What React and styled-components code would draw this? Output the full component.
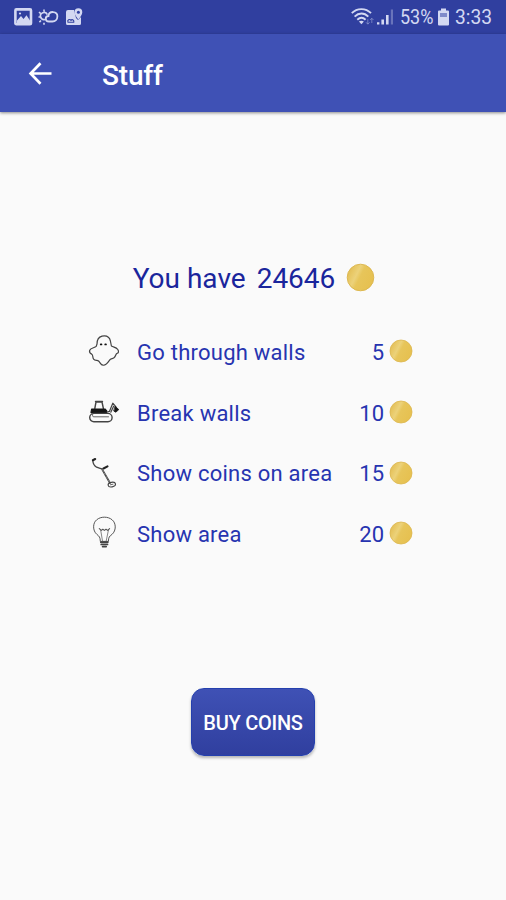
import React from 'react';
import styled, { createGlobalStyle } from 'styled-components';

const GlobalStyle = createGlobalStyle`
  * {
    box-sizing: border-box;
  }

  body {
    margin: 0;
    background: #fafafa;
    font-family: Roboto, 'Liberation Sans', sans-serif;
  }
`;

const Screen = styled.div`
  display: flex;
  flex-direction: column;
  width: 100%;
  height: 900px;
  background: #fafafa;
`;

const StatusBar = styled.div`
  display: flex;
  justify-content: space-between;
  height: 34px;
  padding: 0 14px;
  background: #303f9f;
  color: #d3d8f2;
`;

const StatusGroup = styled.div`
  display: flex;
  align-items: center;

  svg {
    display: block;
    flex: none;
  }
`;

const StatusText = styled.span`
  width: ${({ $width }) => $width}px;
  margin-left: ${({ $gap }) => $gap}px;
  font-size: 20px;
  line-height: 34px;
  white-space: nowrap;
  transform: scaleX(${({ $scale }) => $scale || 1});
  transform-origin: left center;
`;

const AppBar = styled.header`
  display: flex;
  align-items: center;
  height: 78px;
  padding: 0 28px;
  background: #3f51b5;
  box-shadow: 0 1px 3px rgba(0, 0, 0, 0.45);
  color: #fff;
`;

const BackButton = styled.button`
  display: flex;
  padding: 0;
  border: none;
  background: none;
  color: inherit;
  cursor: pointer;
`;

const Title = styled.h1`
  margin: 5px 0 0 50px;
  font-size: 28px;
  font-weight: 500;
  line-height: 34px;
  letter-spacing: -0.2px;
`;

const Content = styled.main`
  display: flex;
  flex-direction: column;
  flex: 1;
  align-items: center;
  padding-top: 147px;
`;

const Balance = styled.div`
  display: flex;
  align-items: center;
  height: 36px;
  padding-left: 2px;
  font-size: 28px;
  color: #1a259c;

  span {
    margin: 2px 11px 0 0;
  }
`;

const ItemList = styled.ul`
  display: flex;
  flex-direction: column;
  width: 325px;
  margin: 26px 5px 0 0;
  padding: 0;
  list-style: none;
`;

const Item = styled.li`
  display: grid;
  grid-template-columns: 32px 1fr auto 24px;
  align-items: center;
  height: 60.7px;
  font-size: 22px;
  color: #2734b0;
`;

const ItemName = styled.span`
  padding: 2px 0 0 17px;
  letter-spacing: 0.24px;
  white-space: nowrap;
`;

const Price = styled.span`
  padding-top: 2px;
  margin-right: 5px;
`;

const BuyButton = styled.button`
  width: 124px;
  height: 68px;
  margin: 124px 0 0;
  padding: 2px 0 0;
  border: 1px solid #2440ae;
  border-radius: 13px;
  background: linear-gradient(#3f51b5, #303f9f);
  box-shadow: 0 2px 3px rgba(0, 0, 0, 0.28);
  color: #fff;
  font-family: inherit;
  font-size: 20px;
  font-weight: 500;
  letter-spacing: -0.25px;
  white-space: nowrap;
  cursor: pointer;
`;

function Coin({ size }) {
  const id = `coin-${size}`;
  return (
    <svg width={size} height={size} viewBox="0 0 24 24">
      <defs>
        <linearGradient id={id} x1="0" y1="0.2" x2="1" y2="0.7">
          <stop offset="0" stopColor="#e0ba50" />
          <stop offset="0.2" stopColor="#e8c866" />
          <stop offset="0.36" stopColor="#ecd27a" />
          <stop offset="0.5" stopColor="#e7c55a" />
          <stop offset="1" stopColor="#e6c04f" />
        </linearGradient>
      </defs>
      <circle cx="12" cy="12" r="11" fill={`url(#${id})`} stroke="#dcb64f" strokeWidth="0.8" />
    </svg>
  );
}

const iconProps = {
  width: 32,
  height: 34,
  viewBox: '0 0 32 34',
  fill: 'none',
  stroke: '#444',
  strokeWidth: 1.2,
  strokeLinecap: 'round',
  strokeLinejoin: 'round',
};

const GhostIcon = () => (
  <svg {...iconProps}>
    <path d="M9 10C9 5 11 3 14 2.2C18 1.4 21.5 3 22.4 7L23.4 12C26 13.5 28 13 29.8 15.5C31 17.5 30.7 19 28.8 19.5C27.5 20.5 27.8 22.5 26 23.8C24.5 25 22.6 24.4 21.4 26.4C20 28.5 17.5 31.7 15 31.2C12.8 31 12.2 28.5 10.8 27.2C9.3 26 7 27 5.6 25.2C4.4 23.7 5.4 21.2 3.6 20.1C2 19.3 1 18.4 1.7 16.2C2.8 13.7 6.5 14 8.2 12.4Z" />
    <path d="M12.8 10.4h0.6M17.3 10.4h0.6" stroke="#111" strokeWidth="1.9" />
  </svg>
);

const BulldozerIcon = () => (
  <svg {...iconProps}>
    <path d="M6.8 13.5L8 7H14L15.4 13.5M7.5 6.5H14.5" strokeWidth="1.4" />
    <path d="M3.6 14H17L18.7 15.8V17.6H3Z" fill="#151515" stroke="#151515" />
    <rect x="1.7" y="18.4" width="22.4" height="8.4" rx="4.2" strokeWidth="1.4" />
    <path d="M4.6 18.6V20.7Q4.6 21.8 5.8 21.8H20.5" stroke="#666" strokeWidth="1" />
    <path d="M19.2 17L21.4 16.4L24.8 8.2L28 11.8M22.8 17.2L25.6 11.2" />
    <path d="M27.3 11.4L30.8 14.6L27.8 17.2L26 16.2Z" fill="#151515" stroke="#151515" strokeWidth="0.8" />
  </svg>
);

const DetectorIcon = () => (
  <svg {...iconProps}>
    <path d="M4.8 4.5C5 7.8 6.6 10 8.6 11.2C10.5 12 12 12.5 14.6 13.2" strokeWidth="1.3" />
    <path d="M4.9 4.2L7.2 3M15.5 12.5L19.5 10.4" stroke="#222" strokeWidth="2.1" />
    <path d="M14.3 13.6L22 27" strokeWidth="1.8" />
    <path d="M14.3 13.6L22 27" stroke="#aaa" strokeWidth="0.6" strokeDasharray="2 2" />
    <ellipse cx="23.8" cy="28.6" rx="3.7" ry="2.3" transform="rotate(-10 23.8 28.6)" />
    <path d="M22.4 28.8l2.6-.6" strokeWidth="0.8" />
  </svg>
);

const BulbIcon = () => (
  <svg {...iconProps} strokeWidth="1">
    <path d="M12.3 25C12.3 21.3 11.2 20.2 8.9 18.4C4.4 14.6 4.7 6.8 8.7 3.8C12.6 0.3 20.2 0.3 24.1 3.8C28.2 7 28.4 14.6 24 18.4C21.5 20.2 20.4 21.3 20.4 25Z" stroke="#555" />
    <path d="M14.5 25L12.7 14.2M18.2 25L20.4 14.2" stroke="#777" strokeWidth="0.9" />
    <path d="M11.3 12.6L13.3 14.4L14.8 13.2L16.4 14.4L18 13.2L19.7 14.4L21.6 12.6" stroke="#555" strokeWidth="1.1" />
    <path d="M12.8 26.2H19.8M13.2 28.4H19.5M14.6 30.6H18.2" stroke="#444" strokeWidth="1.7" />
  </svg>
);

const BackArrow = () => (
  <svg width="24" height="24" viewBox="0 0 24 24" fill="none" stroke="currentColor" strokeWidth="2.7">
    <path d="M23.5 12.5H3M12.5 2.2L2.6 12.5L12.5 22.8" />
  </svg>
);

const NotificationIcons = () => (
  <svg width="70" height="22" viewBox="0 0 70 22" fill="none" stroke="currentColor">
    <rect x="1.4" y="3.4" width="15.6" height="14.8" rx="1" strokeWidth="2.6" />
    <path d="M3 14.5L7 10L9.5 13L12.5 9.2L16 14.5V17H3Z" fill="currentColor" stroke="none" />
    <circle cx="6" cy="7.5" r="1.1" fill="currentColor" stroke="none" />
    <path d="M31 13.5A3.6 3.6 0 1 1 33.4 8.6M30 3.5v2M25 6l1.5 1.4M24.5 11h2.2M25.4 16.1l1.6-1.6M30 18.8v-2" strokeWidth="1.6" />
    <path d="M35 15.5C30.5 15.5 31 10 34.5 10C34.8 4.5 43.5 4.8 43.4 10.3C43.4 13.5 41.2 15.5 38.5 15.5Z" strokeWidth="1.8" />
    <path d="M54 4H60L62 12L64 14L67 11V17.5Q67 19 65.5 19H53.5Q52 19 52 17.5V6Q52 4 54 4Z" fill="currentColor" stroke="none" />
    <path d="M64.4 13.5C62.5 10.8 60.5 8.8 60.5 6.2A3.9 3.9 0 0 1 68.3 6.2C68.3 8.8 66.3 10.8 64.4 13.5Z" fill="currentColor" stroke="none" />
    <circle cx="64.4" cy="6.2" r="1.5" fill="#303f9f" stroke="none" />
    <path d="M54 16.2C53 14 55.5 12.5 57 14.3C58.3 12.8 60.3 14.3 59.8 16.2Z" stroke="#303f9f" strokeWidth="1.1" />
  </svg>
);

const WifiIcon = () => (
  <svg width="25" height="20" viewBox="0 0 25 20" fill="none" stroke="currentColor">
    <path d="M0.8 6.2C6 0.7 14.8 0.7 20 6.2M3.6 9.6C7.8 5.5 13.2 5.5 17.3 9.6M6.3 12.8C9 10.3 12 10.3 14.6 12.8" strokeWidth="1.9" />
    <path d="M7.9 14.6Q10.4 12.8 12.9 14.6L10.4 17.2Z" fill="currentColor" stroke="none" />
    <path d="M16.8 12.2V17M15 15.3L16.8 17.2L18.6 15.3M20.8 16V11.5M19.1 13L20.8 11.3L22.5 13" strokeWidth="0.9" opacity="0.45" />
  </svg>
);

const SignalIcon = () => (
  <svg width="19" height="18" viewBox="0 0 19 18" fill="currentColor">
    <path d="M1 14.2h2.4v2.3H1zM5.4 11.5H8v5H5.4zM10 7h2.6v9.5H10z" />
    <path d="M14.8 1.5h2.2v15h-2.2z" opacity="0.35" />
  </svg>
);

const BatteryIcon = () => (
  <svg width="13" height="18" viewBox="0 0 13 18" fill="currentColor">
    <path d="M4 0.5h5v2h2q1 0 1 1V16.5q0 1-1 1H2q-1 0-1-1V3.5q0-1 1-1h2z" />
    <path d="M3 5h7v4H3z" fill="#7f8aca" />
  </svg>
);

const items = [
  { name: 'Go through walls', price: 5, Icon: GhostIcon },
  { name: 'Break walls', price: 10, Icon: BulldozerIcon },
  { name: 'Show coins on area', price: 15, Icon: DetectorIcon },
  { name: 'Show area', price: 20, Icon: BulbIcon },
];

export default function App() {
  return (
    <>
      <GlobalStyle />
      <Screen>
        <StatusBar>
          <StatusGroup>
            <NotificationIcons />
          </StatusGroup>
          <StatusGroup>
            <WifiIcon />
            <SignalIcon />
            <StatusText $width={37} $gap={5} $scale={0.9}>53%</StatusText>
            <BatteryIcon />
            <StatusText $width={37} $gap={5} $scale={0.96}>3:33</StatusText>
          </StatusGroup>
        </StatusBar>
        <AppBar>
          <BackButton type="button" aria-label="Back">
            <BackArrow />
          </BackButton>
          <Title>Stuff</Title>
        </AppBar>
        <Content>
          <Balance>
            <span>You have</span>
            <span>24646</span>
            <Coin size={29} />
          </Balance>
          <ItemList>
            {items.map(({ name, price, Icon }) => (
              <Item key={name}>
                <Icon />
                <ItemName>{name}</ItemName>
                <Price>{price}</Price>
                <Coin size={24} />
              </Item>
            ))}
          </ItemList>
          <BuyButton type="button">BUY COINS</BuyButton>
        </Content>
      </Screen>
    </>
  );
}
